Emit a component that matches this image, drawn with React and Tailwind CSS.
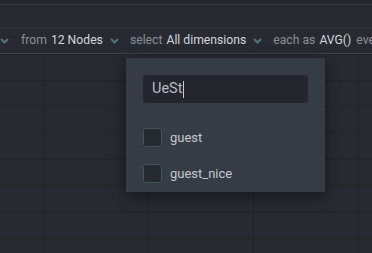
import React from 'react';

const Chevron = ({ className = '' }) => (
  <svg width="9" height="6" viewBox="0 0 9 6" className={`shrink-0 ${className}`}>
    <path d="M1 1 L4.5 4.5 L8 1" fill="none" stroke="#587282" strokeWidth="2" strokeLinejoin="round" />
  </svg>
);

const Checkbox = ({ label }) => (
  <label className="flex items-center gap-[8px] h-[19px]">
    <span className="w-[19px] h-[19px] rounded-[3px] bg-[#252930] border border-[#48525b]" />
    <span className="text-[13px] text-[#c4c8ce]">{label}</span>
  </label>
);

export default function App() {
  return (
    <div
      className="relative w-[372px] h-[253px] overflow-hidden bg-[#272a31]"
      style={{ fontFamily: 'Roboto, Lato, sans-serif' }}
    >
      {/* top band */}
      <div className="h-[5px] bg-[#24272d] border-b border-[#363a40]" />
      <div className="h-[23px] bg-[#272a31] border-b border-[#30343b]" />

      {/* toolbar */}
      <div className="h-[26px] flex items-center whitespace-nowrap overflow-hidden text-[12.2px] border-b border-[#3e454d] bg-[#272a31]">
        <Chevron className="ml-[0px] mr-[12px]" />
        <span className="text-[#8a9098]">from</span>
        <span className="ml-[4px] text-[#d3d6db]">12 Nodes</span>
        <Chevron className="ml-[7px] mr-[11px]" />
        <span className="text-[#8a9098]">select</span>
        <span className="ml-[4px] text-[#d3d6db]">All dimensions</span>
        <Chevron className="ml-[7px] mr-[11px]" />
        <span className="text-[#8a9098]">each as</span>
        <span className="ml-[4px] text-[#d3d6db]">AVG()</span>
        <span className="ml-[5px] text-[#8a9098]">every</span>
      </div>

      {/* grid */}
      <div className="h-[200px] bg-[linear-gradient(to_right,#1f2321_1px,transparent_1px),linear-gradient(to_bottom,#1f2321_1px,transparent_1px)] bg-[size:105px_26.3px] bg-[position:43px_26px]" />

      {/* dropdown */}
      <div className="absolute left-[126px] top-[58px] w-[199px] h-[134px] bg-[#363c45] shadow-[0_4px_14px_rgba(0,0,0,0.45)] px-[17px] pt-[17px]">
        <div className="h-[28px] rounded-[3px] bg-[#23262d] flex items-center pl-[9px]">
          <span className="text-[14.5px] text-[#b6bcc4]">UeSt</span>
          <span className="w-px h-[17px] bg-[#c8ccd2] ml-[1px]" />
        </div>
        <div className="mt-[25px] flex flex-col gap-[17px]">
          <Checkbox label="guest" />
          <Checkbox label="guest_nice" />
        </div>
      </div>
    </div>
  );
}
